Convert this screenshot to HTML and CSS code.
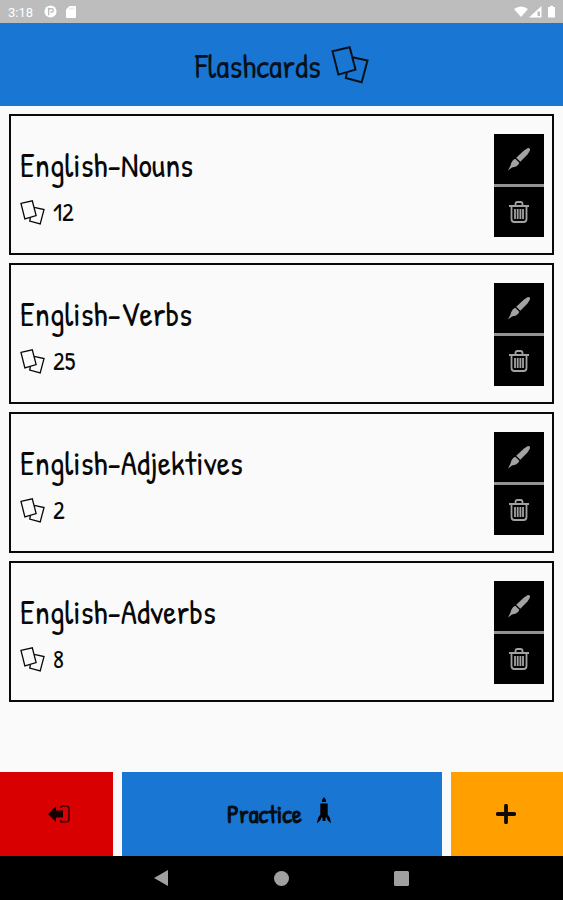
FILE: index.html
```html
<!DOCTYPE html>
<html lang="en">
<head>
<meta charset="utf-8">
<title>Flashcards</title>
<link rel="stylesheet" href="styles.css">
</head>
<body>
<svg class="defs" aria-hidden="true">
  <symbol id="cards" viewBox="0 0 38 38"><path d="M1.5 5.2 18.7 1.2 24.5 23.6 7.4 28.6ZM21.5 11.2 36.5 14.6 30.7 36.3 14.8 32 15.8 27" fill="none" stroke="currentColor" stroke-width="2"/></symbol>
  <symbol id="brush" viewBox="0 0 24 24"><path d="M20.500 1.200C22 .3 23.800 2 22.800 3.700L20.500 7.500 13.300 14.800 9.200 10.700 17 3.500Z M8.300 11.700 12.300 15.700C11.300 19 8 20 5 20.500L1 23.500 3.500 18.500C4.500 15 5.500 12.500 8.300 11.700Z"/></symbol>
  <symbol id="trash" viewBox="0 0 20 22"><path d="M0 5H20M6.500 4.500V3Q6.500 1 8.500 1H11.500Q13.500 1 13.500 3V4.500M2.500 5V18Q2.500 21 5.500 21H14.500Q17.500 21 17.500 18V5M6 8V18M8.700 8V18M11.400 8V18M14 8V18" fill="none" stroke="currentColor" stroke-width="1.800"/></symbol>
</svg>
<div class="status">
  <span class="clock">3:18</span>
  <svg class="app-dot" viewBox="0 0 14 14"><circle cx="7" cy="7" r="6.500" fill="#fff"/><path d="M5 3V11M5 4H8.500Q10 4 10 5.700T8.500 7.500H7" fill="none" stroke="#bdbdbd" stroke-width="1.500"/></svg>
  <svg class="sd" viewBox="0 0 10 12"><path d="M3.500 0H9Q10 0 10 1V11Q10 12 9 12H1Q0 12 0 11V3.500Z" fill="#fff"/><path d="M4 1.500V3.500M6 1.500V3.500M8 1.500V3.500" stroke="#ccc" stroke-width=".7"/></svg>
  <svg class="signals" viewBox="0 0 44 14"><path d="M2 4Q9 -1 16 4L9 12Z" fill="#fff"/><path d="M17 12.500 29.500 1V12.500Z" fill="#fff"/><path d="M25.500 6.500H28V11H25.500Z" fill="#bdbdbd"/><path d="M36 2H38V.7H41V2H43V12.500H36Z" fill="#fff"/></svg>
</div>
<header class="header">
  <h1>Flashcards</h1>
  <svg class="header-icon"><use href="#cards"/></svg>
</header>
<main class="list">
  <article class="card">
    <div class="info"><h2>English-Nouns</h2><p><svg><use href="#cards"/></svg><span>12</span></p></div>
    <div class="actions"><button aria-label="Edit"><svg class="brush"><use href="#brush"/></svg></button><button aria-label="Delete"><svg class="trash"><use href="#trash"/></svg></button></div>
  </article>
  <article class="card">
    <div class="info"><h2>English-Verbs</h2><p><svg><use href="#cards"/></svg><span>25</span></p></div>
    <div class="actions"><button aria-label="Edit"><svg class="brush"><use href="#brush"/></svg></button><button aria-label="Delete"><svg class="trash"><use href="#trash"/></svg></button></div>
  </article>
  <article class="card">
    <div class="info"><h2>English-Adjektives</h2><p><svg><use href="#cards"/></svg><span>2</span></p></div>
    <div class="actions"><button aria-label="Edit"><svg class="brush"><use href="#brush"/></svg></button><button aria-label="Delete"><svg class="trash"><use href="#trash"/></svg></button></div>
  </article>
  <article class="card">
    <div class="info"><h2>English-Adverbs</h2><p><svg><use href="#cards"/></svg><span>8</span></p></div>
    <div class="actions"><button aria-label="Edit"><svg class="brush"><use href="#brush"/></svg></button><button aria-label="Delete"><svg class="trash"><use href="#trash"/></svg></button></div>
  </article>
</main>
<footer class="footer">
  <button class="exit" aria-label="Exit"><svg viewBox="0 0 22 18"><path d="M0 9 8 1V5.500H15V12.500H8V17Z" fill="#180000"/><path d="M13 1H18Q21 1 21 4V14Q21 17 18 17H13V15M13 1V3" fill="none" stroke="#3b0000" stroke-width="1.500"/></svg></button>
  <button class="practice"><span>Practice</span><svg viewBox="0 0 14 27"><path d="M7 0 9 3V5H5V3ZM3.300 6.500H10.700V17.500L13 21 14 26.500 10.500 23 9.500 20.500H8.500V24H5.500V20.500H4.500L3.500 23 0 26.500 1 21 3.300 17.500Z"/></svg></button>
  <button class="add" aria-label="Add"><svg viewBox="0 0 20 20"><path d="M10 1.700V18.300M1.700 10H18.300" stroke="#100a00" stroke-width="3.800" stroke-linecap="round"/></svg></button>
</footer>
<nav class="nav">
  <svg viewBox="0 0 14 16"><path d="M0 8 14 0V16Z"/></svg>
  <svg viewBox="0 0 14 14"><circle cx="7" cy="7" r="7"/></svg>
  <svg viewBox="0 0 15 15"><rect width="15" height="15" rx="1.500"/></svg>
</nav>
</body>
</html>
```
FILE: styles.css
```css
* { box-sizing: border-box; }
body {
  margin: 0; height: 900px; display: flex; flex-direction: column; overflow: hidden;
  background: #fafafa; color: #090909;
  font-family: "Patrick Hand", Lato, sans-serif;
}
h1, h2, p { margin: 0; font-weight: 400; }
button { border: 0; padding: 0; font: inherit; color: inherit; display: flex; align-items: center; justify-content: center; }
.defs { display: none; }

.status { height: 23px; background: #bdbdbd; display: flex; align-items: center; padding: 0 7px 0 8px; color: #fff; }
.clock { font: 13px/23px Roboto, sans-serif; width: 36px; padding-top: 2px; }
.app-dot { width: 13px; height: 13px; }
.sd { width: 10px; height: 12px; margin-left: 9px; }
.signals { width: 44px; height: 14px; margin-left: auto; }

.header { height: 83px; background: #1976d2; display: flex; align-items: center; padding-left: 195px; color: #06111d; }
.header h1 { width: 136px; font-size: 33.3px; line-height: 36px; padding-top: 2px; white-space: nowrap; }
.header-icon { width: 38px; height: 38px; }

.list { flex: 1; padding: 8px 9px 0; display: flex; flex-direction: column; gap: 8px; }
.card { height: 141px; border: 2px solid #090909; padding: 18px 8px 0 9px; display: flex; justify-content: space-between; }
.info h2 { font-size: 33.2px; line-height: 36px; margin-top: 13px; white-space: nowrap; }
.info p { display: flex; align-items: center; height: 26px; margin-top: 16px; font-size: 25px; line-height: 26px; }
.info p svg { width: 25px; height: 25px; margin-right: 8px; }
.actions { width: 50px; height: 103px; background: #929292; display: flex; flex-direction: column; gap: 3px; }
.actions button { height: 50px; background: #000; color: #a2a2a2; }
.brush { width: 24px; height: 24px; fill: #a2a2a2; }
.trash { width: 20px; height: 22px; }

.footer { height: 84px; display: grid; grid-template-columns: 113px 320px 1fr; column-gap: 9px; }
.exit { background: #d80000; }
.exit svg { width: 22px; height: 18px; margin-left: 4px; }
.practice { background: #1976d2; color: #050d16; justify-content: flex-start; padding-left: 105px; }
.practice span { width: 90px; font-size: 25px; font-weight: 700; text-align: left; }
.practice svg { width: 14px; height: 27px; margin-top: -7px; }
.add { background: #ffa000; }
.add svg { width: 20px; height: 20px; margin-right: 2px; }

.nav { height: 44px; background: #000; display: flex; align-items: center; padding-left: 154px; }
.nav svg { width: 14px; height: 16px; fill: #a0a0a0; margin-right: 106px; }
.nav svg + svg { width: 15px; height: 15px; }
.nav svg:last-child { margin: 0 0 0 -1px; }
```
